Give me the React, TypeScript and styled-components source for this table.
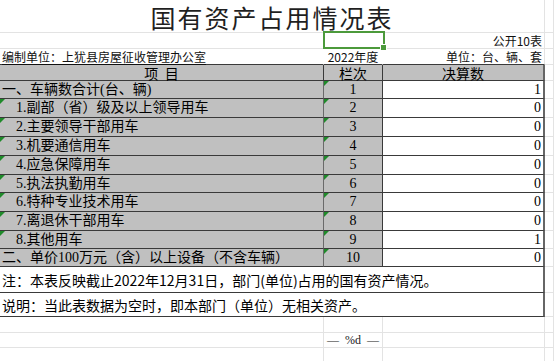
import React from "react";
import styled, { createGlobalStyle, css } from "styled-components";

const GlobalStyle = createGlobalStyle`
  html, body {
    margin: 0;
    padding: 0;
    background: #ffffff;
  }
  #root {
    width: 554px;
    height: 361px;
    overflow: hidden;
  }
`;

const SANS = `"Noto Sans CJK SC", "Noto Sans", sans-serif`;
const SONG = `"Liberation Serif", "Noto Sans CJK SC", serif`;
const GRID = "#e3e3e3";
const INK = "#3a3a3a";
const SHADE = "#c0c0c0";

const items = [
  { label: "一、车辆数合计(台、辆)", no: 1, value: 1, sub: false, h: 18 },
  { label: "1.副部（省）级及以上领导用车", no: 2, value: 0, sub: true, h: 19 },
  { label: "2.主要领导干部用车", no: 3, value: 0, sub: true, h: 19 },
  { label: "3.机要通信用车", no: 4, value: 0, sub: true, h: 19 },
  { label: "4.应急保障用车", no: 5, value: 0, sub: true, h: 19 },
  { label: "5.执法执勤用车", no: 6, value: 0, sub: true, h: 18 },
  { label: "6.特种专业技术用车", no: 7, value: 0, sub: true, h: 19 },
  { label: "7.离退休干部用车", no: 8, value: 0, sub: true, h: 19 },
  { label: "8.其他用车", no: 9, value: 1, sub: true, h: 18 },
  { label: "二、单价100万元（含）以上设备（不含车辆）", no: 10, value: 0, sub: false, h: 18 },
];

const rowHeights = [33, 16, 16, 16, ...items.map((r) => r.h), 26, 24, 16, 15, 16];

const Sheet = styled.div<{ $rows: string }>`
  display: grid;
  grid-template-columns: 324px 59px 162px 1fr;
  grid-template-rows: ${(p) => p.$rows};
  width: 554px;
  font-family: ${SANS};
  color: #000;
`;

// little green corner that Excel puts on "number stored as text" cells
const flagMark = css`
  &::before {
    content: "";
    position: absolute;
    left: 0;
    top: 0;
    border-top: 5px solid #1f8a2a;
    border-right: 5px solid transparent;
  }
`;

const TitleCell = styled.div`
  grid-column: 1 / 4;
  box-sizing: border-box;
  border-bottom: 1px solid ${GRID};
  border-right: 1px solid ${GRID};
  padding-top: 3px;
  text-align: center;
  font-size: 25px;
  letter-spacing: 2px;
  line-height: 29px;
  color: #1f1f1f;
`;

const InfoCell = styled.div<{ $align?: "left" | "center" | "right"; $under?: boolean; $edge?: boolean; $ink?: boolean }>`
  box-sizing: border-box;
  position: relative;
  font-size: 12px;
  line-height: 15px;
  white-space: nowrap;
  text-align: ${(p) => p.$align ?? "left"};
  padding: 0 2px;
  border-bottom: 1px solid ${(p) => (p.$ink ? INK : GRID)};
  border-right: 1px solid ${(p) => (p.$edge ? GRID : "transparent")};
  text-decoration: ${(p) => (p.$under ? "underline" : "none")};
  text-underline-offset: 2px;
  color: #111;
`;

const SelectedCell = styled.div`
  position: relative;
  border-bottom: 1px solid ${GRID};
  &::after {
    content: "";
    position: absolute;
    left: -1px;
    top: -2px;
    right: -2px;
    bottom: -1px;
    border: 2px solid #4c9a3b;
  }
  &::before {
    content: "";
    position: absolute;
    right: -4px;
    bottom: -3px;
    width: 5px;
    height: 5px;
    background: #4c9a3b;
    border: 1px solid #fff;
    z-index: 1;
  }
`;

const HeadCell = styled.div<{ $wide?: boolean }>`
  box-sizing: border-box;
  background: ${SHADE};
  border-bottom: 1px solid ${INK};
  border-right: ${(p) => (p.$wide ? `2px solid #666` : `1px solid ${INK}`)};
  font-size: 14px;
  line-height: 16px;
  text-align: center;
  white-space: pre;
`;

const LabelCell = styled.div<{ $sub: boolean }>`
  box-sizing: border-box;
  position: relative;
  background: ${SHADE};
  border-bottom: 1px solid ${INK};
  border-right: 1px solid #6a6a6a;
  font-family: ${SONG};
  font-size: 14px;
  line-height: 17px;
  padding-left: ${(p) => (p.$sub ? "16px" : "2px")};
  white-space: nowrap;
  overflow: hidden;
  ${(p) => p.$sub && flagMark}
`;

const IndexCell = styled.div`
  box-sizing: border-box;
  position: relative;
  background: ${SHADE};
  border-bottom: 1px solid ${INK};
  border-right: 1px solid ${INK};
  font-family: ${SONG};
  font-size: 14px;
  line-height: 17px;
  text-align: center;
  ${flagMark}
`;

const ValueCell = styled.div`
  box-sizing: border-box;
  background: #fff;
  border-bottom: 1px solid ${INK};
  border-right: 2px solid #666;
  font-family: ${SONG};
  font-size: 14px;
  line-height: 17px;
  text-align: right;
  padding-right: 2px;
`;

const NoteCell = styled.div`
  grid-column: 1 / 4;
  box-sizing: border-box;
  display: flex;
  align-items: center;
  border-bottom: 1px solid ${INK};
  border-right: 2px solid #666;
  font-size: 14px;
  padding-left: 2px;
  white-space: nowrap;
`;

const Spare = styled.div`
  border-bottom: 1px solid ${GRID};
  border-right: 1px solid ${GRID};
`;

const BlankCell = styled.div`
  box-sizing: border-box;
  border-bottom: 1px solid ${GRID};
  border-right: 1px solid ${GRID};
  font-family: ${SONG};
  font-size: 12px;
  line-height: 14px;
  text-align: center;
  white-space: pre;
  color: #222;
`;

export default function App() {
  return (
    <>
      <GlobalStyle />
      <Sheet $rows={rowHeights.map((h) => `${h}px`).join(" ")}>
        <TitleCell>国有资产占用情况表</TitleCell>
        <Spare />

        <InfoCell />
        <SelectedCell />
        <InfoCell $align="right" $edge>公开10表</InfoCell>
        <Spare />

        <InfoCell $under $ink>编制单位：上犹县房屋征收管理办公室</InfoCell>
        <InfoCell $align="center" $ink>2022年度</InfoCell>
        <InfoCell $align="right" $ink $edge>单位：台、辆、套</InfoCell>
        <Spare />

        <HeadCell>{"项  目"}</HeadCell>
        <HeadCell>栏次</HeadCell>
        <HeadCell $wide>决算数</HeadCell>
        <Spare />

        {items.map((r) => (
          <React.Fragment key={r.no}>
            <LabelCell $sub={r.sub}>{r.label}</LabelCell>
            <IndexCell>{r.no}</IndexCell>
            <ValueCell>{r.value}</ValueCell>
            <Spare />
          </React.Fragment>
        ))}

        <NoteCell>注：本表反映截止2022年12月31日，部门(单位)占用的国有资产情况。</NoteCell>
        <Spare />
        <NoteCell>说明：当此表数据为空时，即本部门（单位）无相关资产。</NoteCell>
        <Spare />

        {[0, 1, 2].map((i) => (
          <React.Fragment key={i}>
            <BlankCell />
            <BlankCell>{i === 1 ? "—  %d  —" : ""}</BlankCell>
            <BlankCell />
            <Spare />
          </React.Fragment>
        ))}
      </Sheet>
    </>
  );
}
